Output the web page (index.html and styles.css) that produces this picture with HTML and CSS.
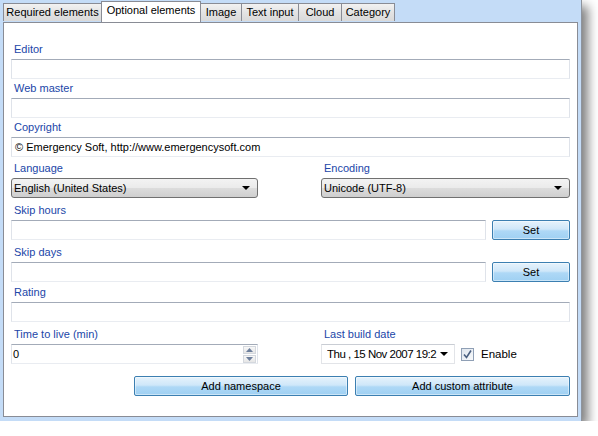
FILE: index.html
```html
<!DOCTYPE html>
<html>
<head>
<meta charset="utf-8">
<link rel="stylesheet" href="styles.css">
</head>
<body>
<div class="window">
  <div class="tabs">
    <div class="tab t-req">Required elements</div>
    <div class="tab tab-active t-opt">Optional elements</div>
    <div class="tab t-img">Image</div>
    <div class="tab t-txt">Text input</div>
    <div class="tab t-cld">Cloud</div>
    <div class="tab t-cat">Category</div>
  </div>
  <div class="panel">
    <div class="field f-editor">
      <div class="label">Editor</div>
      <div class="textbox"></div>
    </div>
    <div class="field f-g3">
      <div class="label">Web master</div>
      <div class="textbox"></div>
    </div>
    <div class="field f-g3">
      <div class="label">Copyright</div>
      <div class="textbox">© Emergency Soft, http://www.emergencysoft.com</div>
    </div>
    <div class="cols f-g5">
      <div class="field">
        <div class="label">Language</div>
        <div class="combo"><span>English (United States)</span><span class="arrow"></span></div>
      </div>
      <div class="field">
        <div class="label">Encoding</div>
        <div class="combo"><span>Unicode (UTF-8)</span><span class="arrow"></span></div>
      </div>
    </div>
    <div class="field f-g6">
      <div class="label">Skip hours</div>
      <div class="row">
        <div class="textbox grow"></div>
        <div class="button set">Set</div>
      </div>
    </div>
    <div class="field f-g6">
      <div class="label">Skip days</div>
      <div class="row">
        <div class="textbox grow"></div>
        <div class="button set">Set</div>
      </div>
    </div>
    <div class="field f-g4">
      <div class="label">Rating</div>
      <div class="textbox"></div>
    </div>
    <div class="cols f-g6">
      <div class="field">
        <div class="label">Time to live (min)</div>
        <div class="textbox numeric">
          <span class="numval">0</span>
          <span class="spin">
            <span class="spinbtn"><svg width="7" height="4" viewBox="0 0 7 4"><path d="M0 4 L3.5 0 L7 4 Z" fill="#6d7f9c"/></svg></span>
            <span class="spinbtn"><svg width="7" height="4" viewBox="0 0 7 4"><path d="M0 0 L3.5 4 L7 0 Z" fill="#6d7f9c"/></svg></span>
          </span>
        </div>
      </div>
      <div class="field">
        <div class="label">Last build date</div>
        <div class="daterow">
          <div class="datepicker"><span class="datetext">Thu , 15 Nov 2007 19:2</span><span class="arrow small"></span></div>
          <span class="check"><svg width="11" height="11" viewBox="0 0 11 11"><path d="M2 5.5 L4.5 8.5 L9 1.5" fill="none" stroke="#4a5f80" stroke-width="1.6"/></svg></span>
          <span class="enable">Enable</span>
        </div>
      </div>
    </div>
    <div class="actions">
      <div class="button wide1">Add namespace</div>
      <div class="button wide2">Add custom attribute</div>
    </div>
  </div>
</div>
</body>
</html>
```

FILE: styles.css
```css
html, body {
  margin: 0;
  padding: 0;
  background: #ffffff;
}
body {
  font-family: "Liberation Sans", Arial, sans-serif;
  font-size: 11px;
  color: #000;
}
.window {
  width: 582px;
  height: 421px;
  box-sizing: border-box;
  background: #c4dcf7;
  border-right: 1px solid #8d939c;
  padding: 1px 3px 4px 3px;
  display: flex;
  flex-direction: column;
  box-shadow: 6px 6px 10px rgba(0, 0, 0, 0.5);
}
.tabs {
  display: flex;
  align-items: flex-end;
  height: 21px;
  position: relative;
  z-index: 1;
}
.tab {
  height: 18px;
  box-sizing: border-box;
  border: 1px solid #898c95;
  border-bottom: none;
  border-right: none;
  background: linear-gradient(#f2f2f2, #e3e3e3 50%, #d9d9d9);
  display: flex;
  align-items: center;
  justify-content: center;
  line-height: 13px;
  margin-bottom: 1px;
}
.t-cat { border-right: 1px solid #898c95; }
.tab-active {
  height: 21px;
  background: #ffffff;
  border-right: 1px solid #898c95;
  margin-bottom: 0;
  padding-bottom: 3px;
}
.tab-active + .tab { border-left: none; }
.t-req { width: 98px; }
.t-opt { width: 100px; }
.t-img { width: 40px; }
.t-txt { width: 57px; }
.t-cld { width: 43px; }
.t-cat { width: 54px; }
.panel {
  flex: 1;
  background: #ffffff;
  border: 1px solid #898c95;
  padding: 0 7px 0 7px;
  display: flex;
  flex-direction: column;
}
.field {
  display: flex;
  flex-direction: column;
}
.f-editor { margin-top: 20px; }
.f-g3 { margin-top: 3px; }
.f-g4 { margin-top: 4px; }
.f-g5 { margin-top: 5px; }
.f-g6 { margin-top: 6px; }
.label {
  color: #2146a8;
  line-height: 13px;
  height: 13px;
  margin-left: 3px;
  margin-bottom: 3px;
}
.textbox {
  height: 20px;
  box-sizing: border-box;
  border: 1px solid #dfe3ea;
  border-top-color: #a3abb8;
  border-bottom-color: #e9ecf1;
  background: #fff;
  padding: 0 3px;
  line-height: 18px;
  white-space: nowrap;
}
.cols {
  display: grid;
  grid-template-columns: 247px 1fr;
  column-gap: 63px;
}
.combo {
  height: 20px;
  box-sizing: border-box;
  border: 1px solid #707070;
  border-radius: 3px;
  background: linear-gradient(#f3f3f3, #ebebeb 48%, #dcdcdc 52%, #cfcfcf);
  display: flex;
  align-items: center;
  justify-content: space-between;
  padding: 0 7px 0 2px;
  line-height: 18px;
}
.arrow {
  width: 0;
  height: 0;
  border-left: 4px solid transparent;
  border-right: 4px solid transparent;
  border-top: 4px solid #000;
}
.row {
  display: flex;
  gap: 6px;
  align-items: flex-start;
}
.grow { flex: 1; }
.button {
  box-sizing: border-box;
  border: 1px solid #3c7fb1;
  border-radius: 2px;
  background: linear-gradient(#e6f3fc, #cfe7f9 45%, #aed8f6 55%, #9fd0f2);
  box-shadow: inset 0 0 0 1px rgba(255,255,255,0.45);
  display: flex;
  align-items: center;
  justify-content: center;
  height: 20px;
  line-height: 18px;
}
.set { width: 78px; height: 20px; }
.numeric {
  display: flex;
  align-items: center;
  justify-content: space-between;
  padding: 0 0 0 1px;
  height: 20px;
}
.spin {
  display: flex;
  flex-direction: column;
  margin-right: 1px;
  gap: 1px;
}
.spinbtn {
  width: 13px;
  height: 8px;
  box-sizing: border-box;
  border: 1px solid #d4d8de;
  background: linear-gradient(#f8f8f8, #e6e6e6);
  display: flex;
  align-items: center;
  justify-content: center;
}
.daterow {
  display: flex;
  align-items: center;
}
.datepicker {
  width: 134px;
  height: 20px;
  box-sizing: border-box;
  border: 1px solid #e2e4e8;
  border-top-color: #c9cdd4;
  display: flex;
  align-items: center;
  justify-content: space-between;
  padding: 0 6px 0 5px;
  white-space: nowrap;
  overflow: hidden;
}
.datetext {
  font-size: 11.5px;
  letter-spacing: -0.5px;
  overflow: hidden;
  width: 113px;
}
.arrow.small {
  flex: none;
}
.check {
  width: 13px;
  height: 13px;
  box-sizing: border-box;
  border: 1px solid #8f9fb5;
  background: linear-gradient(135deg, #dfe6ee, #f7f9fb);
  margin-left: 6px;
  display: flex;
  align-items: center;
  justify-content: center;
}
.enable {
  margin-left: 7px;
  font-size: 11.5px;
}
.actions {
  display: flex;
  justify-content: flex-end;
  gap: 7px;
  margin-top: 12px;
}
.wide1 { width: 214px; }
.wide2 { width: 215px; }
```
